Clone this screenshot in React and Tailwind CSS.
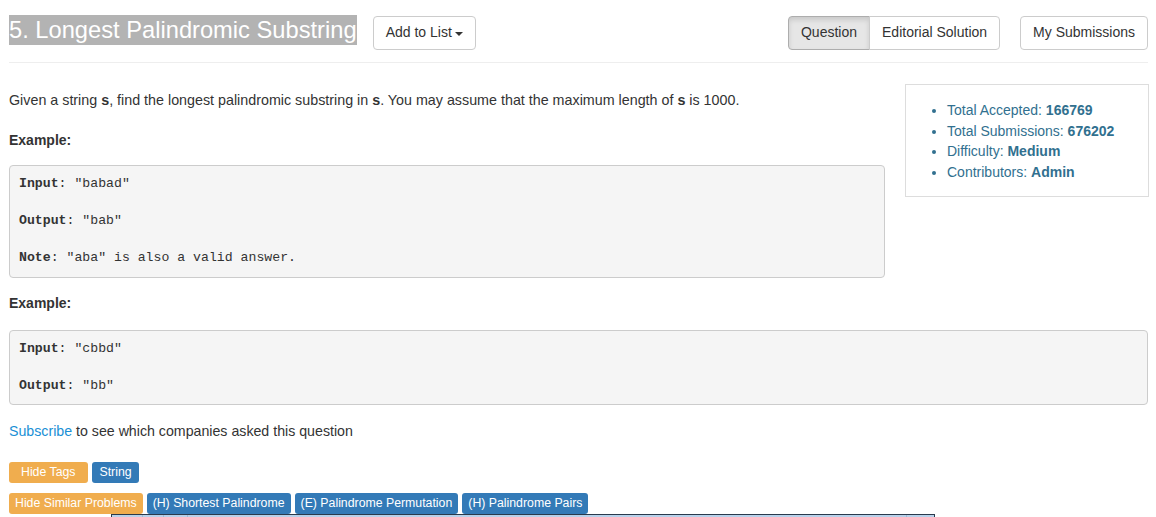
import React from 'react';

const sans = { fontFamily: '"Liberation Sans", Arial, sans-serif' };

function Btn({ children, active, className = '' }) {
  return (
    <button
      className={`h-[34px] px-[12px] text-[14px] text-[#333] border ${
        active ? 'bg-[#e6e6e6] border-[#adadad] shadow-[inset_0_3px_5px_rgba(0,0,0,0.125)]' : 'bg-white border-[#ccc]'
      } ${className}`}
    >
      {children}
    </button>
  );
}

function Tag({ children, orange, className = '' }) {
  return (
    <span
      className={`inline-flex items-center h-[21px] rounded-[3px] text-[12.3px] text-white ${
        orange ? 'bg-[#f0ad4e]' : 'bg-[#337ab7]'
      } ${className}`}
    >
      {children}
    </span>
  );
}

function Pre({ lines }) {
  return (
    <pre
      className="bg-[#f5f5f5] border border-[#ccc] rounded-[4px] px-[9px] py-[9px] text-[13.2px] leading-[18.5px] text-[#333]"
      style={{ fontFamily: '"Liberation Mono", "Courier New", monospace' }}
    >
      {lines.map((l, i) =>
        l ? (
          <div key={i}>
            <b>{l[0]}</b>: {l[1]}
          </div>
        ) : (
          <div key={i}>&nbsp;</div>
        )
      )}
    </pre>
  );
}

export default function App() {
  const stats = [
    ['Total Accepted', '166769'],
    ['Total Submissions', '676202'],
    ['Difficulty', 'Medium'],
    ['Contributors', 'Admin'],
  ];

  return (
    <div className="relative bg-white text-[#333] pl-[9px] pr-[8px] pt-[16px] min-h-[517px] overflow-hidden" style={sans}>
      {/* header */}
      <div className="flex items-center h-[33px]">
        <h3 className="text-[23.7px] leading-[30px] font-normal text-white bg-[#b3b3b3] -mt-[5px]">
          5. Longest Palindromic Substring
        </h3>
        <Btn className="ml-[16px] rounded-[4px] flex items-center gap-[2px]">
          Add to List
          <span className="inline-block w-0 h-0 border-l-[4px] border-r-[4px] border-t-[4px] border-l-transparent border-r-transparent border-t-[#333] ml-[1px] mt-[2px]" />
        </Btn>
        <div className="ml-auto flex">
          <Btn active className="rounded-l-[4px]">Question</Btn>
          <Btn className="rounded-r-[4px] -ml-px">Editorial Solution</Btn>
        </div>
        <Btn className="ml-[20px] rounded-[4px]">My Submissions</Btn>
      </div>

      <hr className="mt-[13px] border-t border-[#eee]" />

      {/* top content */}
      <div className="flex gap-[20px] items-start">
        <div className="w-[876px] shrink-0">
          <p className="mt-[27px] text-[14.3px] leading-[20px]">
            Given a string <b>s</b>, find the longest palindromic substring in <b>s</b>. You may assume that the maximum length of <b>s</b> is 1000.
          </p>
          <p className="mt-[20px] text-[14px] leading-[20px] font-bold">Example:</p>
          <div className="mt-[15px]">
            <Pre lines={[['Input', '"babad"'], null, ['Output', '"bab"'], null, ['Note', '"aba" is also a valid answer.']]} />
          </div>
        </div>
        <div className="mt-[21px] w-[244px] shrink-0 border border-[#ddd] pt-[15px] pb-[14px] pl-[26px]">
          <ul className="list-disc pl-[15px] text-[14px] leading-[20.6px] text-[#31708f] marker:text-[#31708f]">
            {stats.map(([k, v]) => (
              <li key={k}>
                {k}: <b>{v}</b>
              </li>
            ))}
          </ul>
        </div>
      </div>

      <p className="mt-[15px] text-[14px] leading-[20px] font-bold">Example:</p>
      <div className="mt-[17px]">
        <Pre lines={[['Input', '"cbbd"'], null, ['Output', '"bb"']]} />
      </div>

      <p className="mt-[16px] text-[14.2px] leading-[20px]">
        <a className="text-[#1a8fd5]">Subscribe</a> to see which companies asked this question
      </p>

      <div className="mt-[21px] flex gap-[4px]">
        <Tag orange className="pl-[12px] pr-[13px]">Hide Tags</Tag>
        <Tag className="px-[7px]">String</Tag>
      </div>
      <div className="mt-[10px] flex gap-[4px]">
        <Tag orange className="px-[6px]">Hide Similar Problems</Tag>
        <Tag className="px-[6px]">(H) Shortest Palindrome</Tag>
        <Tag className="px-[6px]">(E) Palindrome Permutation</Tag>
        <Tag className="px-[6px]">(H) Palindrome Pairs</Tag>
      </div>

      {/* overlapping window edge */}
      <div className="absolute left-[111px] top-[514px] w-[824px] h-[12px] border-t border-l border-r border-[#2a3a4c] bg-[#b9d1ea] flex">
        <div className="w-[2px] h-full" />
        <div className="w-[29px] border-r border-[#9fbbd8]" />
        <div className="w-[21px] border-r border-[#9fbbd8]" />
        <div className="w-[24px] border-r border-[#9fbbd8]" />
        <div className="flex-1" />
        <div className="w-[28px] border-l border-[#9fbbd8]" />
      </div>
    </div>
  );
}
